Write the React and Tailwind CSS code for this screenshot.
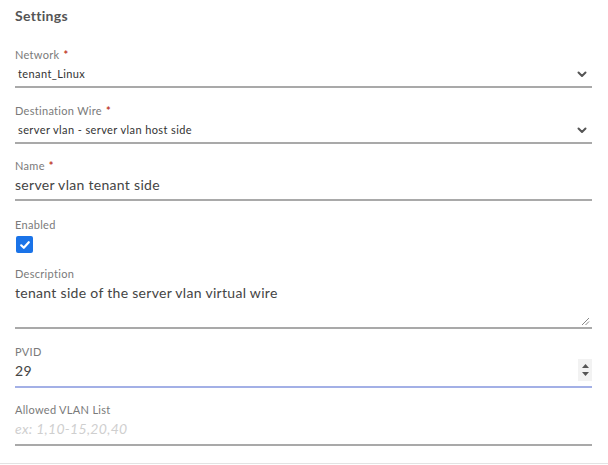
import React from "react";

const font = { fontFamily: "Lato, 'Open Sans', sans-serif" };

function Label({ children, req }) {
  return (
    <div className="h-[17px] text-[11px] leading-[17px] tracking-[0.3px] text-[#7a7a7a]">
      {children}
      {req && <span className="ml-[4px] text-[#c0392b] font-bold">*</span>}
    </div>
  );
}

function Chevron() {
  return (
    <svg width="10" height="7" viewBox="0 0 10 7" className="mr-[5px]">
      <path d="M1.5 1.5 L5 5 L8.5 1.5" fill="none" stroke="#555" strokeWidth="2" strokeLinecap="round" strokeLinejoin="round" />
    </svg>
  );
}

function SelectField({ label, value, className }) {
  return (
    <div className={className}>
      <Label req>{label}</Label>
      <div className="flex h-[23px] items-center justify-between border-b-2 border-[#a9a9a9] box-content">
        <span className="pl-[3px] text-[11px] tracking-[0.4px] text-[#333]">{value}</span>
        <Chevron />
      </div>
    </div>
  );
}

export default function App() {
  return (
    <div className="w-[608px] h-[465px] bg-white" style={font}>
      <div className="h-[464px] border-b border-[#e3e3e3] px-[15px] pr-[16px]">
        <div className="h-[32px] pt-[6px] text-[14px] font-bold leading-[20px] tracking-[0.3px] text-[#555]">Settings</div>
        <SelectField className="mt-[14px]" label="Network" value="tenant_Linux" />
        <SelectField className="mt-[14px]" label="Destination Wire" value="server vlan - server vlan host side" />
        <div className="mt-[13px]">
          <Label req>Name</Label>
          <div className="h-[25px] border-b-2 border-[#a9a9a9] box-content text-[14px] leading-[22px] tracking-[0.3px] text-[#444]">
            server vlan tenant side
          </div>
        </div>
        <div className="mt-[15px]">
          <Label>Enabled</Label>
          <div className="mt-[3px] ml-[1px] flex h-[17px] w-[17px] items-center justify-center rounded-[2px] bg-[#1a73e8]">
            <svg width="12" height="12" viewBox="0 0 12 12">
              <path d="M2.2 6.3 L4.8 8.8 L9.8 3.2" fill="none" stroke="white" strokeWidth="2.2" strokeLinecap="round" strokeLinejoin="round" />
            </svg>
          </div>
        </div>
        <div className="mt-[12px]">
          <Label>Description</Label>
          <div className="relative h-[45px] border-b-2 border-[#a9a9a9] box-content text-[14px] leading-[22px] tracking-[0.3px] text-[#444]">
            tenant side of the server vlan virtual wire
            <svg width="9" height="9" viewBox="0 0 9 9" className="absolute right-[2px] bottom-[1px]">
              <path d="M1 8 L8 1 M4.5 8 L8 4.5" stroke="#888" strokeWidth="1" />
            </svg>
          </div>
        </div>
        <div className="mt-[14px]">
          <Label>PVID</Label>
          <div className="relative flex h-[26px] items-start justify-between border-b-2 border-[#a3b0e6] box-content text-[14px] leading-[22px] tracking-[0.3px] text-[#444]">
            <span>29</span>
            <div className="mt-[-1px] flex h-[22px] w-[14px] flex-col items-center justify-center gap-[4px] bg-[#f2f2f2]">
              <svg width="7" height="4" viewBox="0 0 7 4"><path d="M0 4 L3.5 0 L7 4 Z" fill="#555" /></svg>
              <svg width="7" height="4" viewBox="0 0 7 4"><path d="M0 0 L3.5 4 L7 0 Z" fill="#555" /></svg>
            </div>
          </div>
        </div>
        <div className="mt-[13px]">
          <Label>Allowed VLAN List</Label>
          <div className="h-[26px] border-b-2 border-[#a9a9a9] box-content text-[14px] leading-[22px] tracking-[0.3px] italic text-[#cfcfcf]">
            ex: 1,10-15,20,40
          </div>
        </div>
      </div>
    </div>
  );
}
